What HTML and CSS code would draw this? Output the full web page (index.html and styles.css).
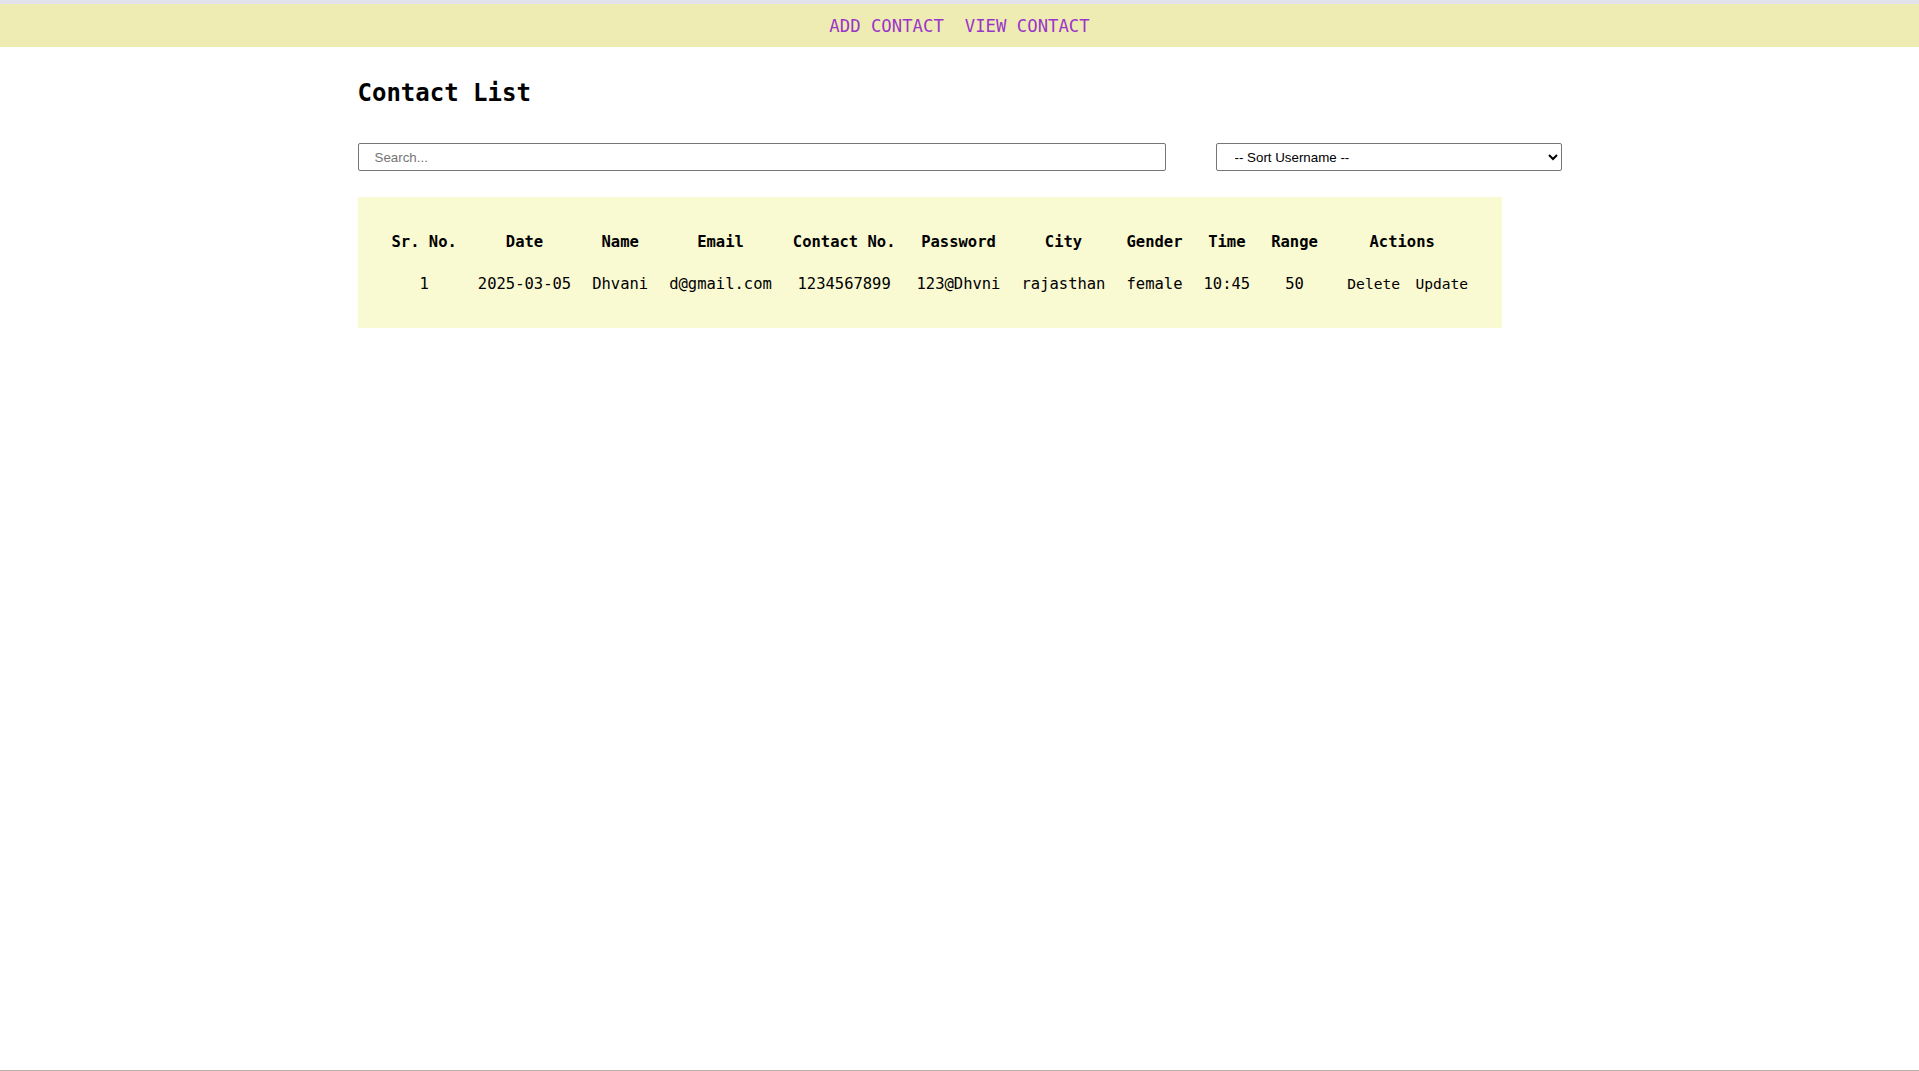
FILE: index.html
```html
<!DOCTYPE html>
<html lang="en">
<head>
<meta charset="utf-8">
<title>Contact List</title>
<link rel="stylesheet" href="styles.css">
</head>
<body>
<nav class="topnav">
  <a class="navlink" href="#">ADD CONTACT</a>
  <a class="navlink" href="#">VIEW CONTACT</a>
</nav>
<main class="container">
  <h2 class="title">Contact List</h2>
  <div class="controls">
    <input class="search" type="text" placeholder="Search...">
    <select class="sort">
      <option>-- Sort Username --</option>
    </select>
  </div>
  <div class="table-wrap">
    <table class="contacts">
      <thead>
        <tr>
          <th>Sr. No.</th>
          <th>Date</th>
          <th>Name</th>
          <th>Email</th>
          <th>Contact No.</th>
          <th>Password</th>
          <th>City</th>
          <th>Gender</th>
          <th>Time</th>
          <th>Range</th>
          <th>Actions</th>
        </tr>
      </thead>
      <tbody>
        <tr>
          <td>1</td>
          <td>2025-03-05</td>
          <td>Dhvani</td>
          <td>d@gmail.com</td>
          <td>1234567899</td>
          <td>123@Dhvni</td>
          <td>rajasthan</td>
          <td>female</td>
          <td>10:45</td>
          <td>50</td>
          <td class="actions"><button class="act">Delete</button> <button class="act">Update</button></td>
        </tr>
      </tbody>
    </table>
  </div>
</main>
</body>
</html>
```

FILE: styles.css
```css
html {
  min-height: 100%;
  background: linear-gradient(to top, #bab2aa 0, #bab2aa 1px, #ffffff 1px) no-repeat;
  background-size: 100% 100vh;
}

body {
  margin: 0;
  font-family: "DejaVu Sans Mono", "Liberation Mono", monospace;
  color: #000;
}

.topnav {
  border-top: 4px solid #e2e2ea;
  background: #eeecb2;
  height: 43px;
  display: flex;
  align-items: center;
  justify-content: center;
  gap: 21px;
}

.navlink {
  color: #9b35c9;
  text-decoration: none;
  font-size: 17.3px;
  line-height: 20px;
}

.container {
  width: 1204px;
  margin: 0 auto;
}

.title {
  margin: 32px 0 0;
  font-size: 24px;
  line-height: 28px;
  font-weight: bold;
}

.controls {
  display: flex;
  justify-content: space-between;
  margin-top: 36px;
}

.search {
  box-sizing: border-box;
  width: 808px;
  height: 28px;
  margin: 0;
  padding: 0 16px;
  border: 1px solid #767676;
  border-radius: 2px;
  font-family: "Liberation Sans", Arial, sans-serif;
  font-size: 13.33px;
  color: #000;
  background: #fff;
}

.search::placeholder {
  color: #757575;
}

.sort {
  box-sizing: border-box;
  width: 346px;
  height: 28px;
  margin: 0;
  padding: 0 4px 0 14px;
  border: 1px solid #767676;
  border-radius: 2px;
  font-family: "Liberation Sans", Arial, sans-serif;
  font-size: 13.33px;
  color: #000;
  background: #fff;
}

.table-wrap {
  margin-top: 26px;
  width: fit-content;
  background: #f9f9d2;
  padding: 25px 25.5px 23px 23.5px;
}

.contacts {
  border-collapse: collapse;
  font-size: 15.5px;
}

.contacts th,
.contacts td {
  padding: 11px 10.5px;
  line-height: 19px;
  text-align: center;
  white-space: nowrap;
}

.contacts th {
  font-weight: bold;
}

.contacts td.actions {
  padding-left: 16px;
  padding-right: 5px;
}

.act {
  background: none;
  border: none;
  padding: 0 3px;
  margin: 0;
  font-family: inherit;
  font-size: 14.6px;
  line-height: 19px;
  color: #000;
  cursor: pointer;
}
```
